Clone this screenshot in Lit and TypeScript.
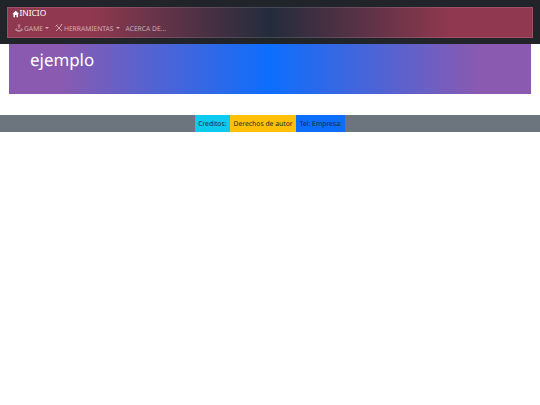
import { LitElement, html, css } from "lit";
import { customElement } from "lit/decorators.js";

@customElement("app-root")
export class AppRoot extends LitElement {
  static styles = css`
    :host { display: block; min-height: 405px; background: #fff; font-family: "Noto Sans", sans-serif; text-rendering: geometricPrecision; }
    .nav { background: #212529; padding: 7px; height: 44px; box-sizing: border-box; }
    .bar { height: 31px; box-sizing: border-box; border: 1px solid rgba(255,255,255,.13);
      background: linear-gradient(90deg, #8f384f 0%, #8f384f 16%, #232c3c 50%, #8f384f 84%, #8f384f 100%);
      padding: 0 4px; display: flex; flex-direction: column; }
    .brand { display: flex; align-items: center; color: #fff; font-size: 8.4px; line-height: 12px; height: 12px; }
    .brand svg { width: 7.500px; height: 8px; }
    .links { display: flex; align-items: center; margin-top: 2px; height: 12px; color: rgba(255,255,255,.6); font-size: 6.700px; gap: 5.500px; padding-left: 3px; }
    .link { display: flex; align-items: center; gap: 1px; }
    .link svg { width: 8px; height: 8px; }
    .caret { width: 0; height: 0; border-left: 2px solid transparent; border-right: 2px solid transparent; border-top: 2px solid currentColor; margin-left: 1.500px; }
    .hero { margin: 0 9px; height: 50px; background: linear-gradient(90deg, #8a5ab0 0%, #8a5ab0 10%, #0d6efd 50%, #8a5ab0 90%, #8a5ab0 100%); color: #fff; font-size: 16.900px; padding: 4px 21px; box-sizing: border-box; line-height: 24px; }
    .foot { margin-top: 21px; height: 17px; background: #6c757d; display: flex; justify-content: center; font-size: 6.800px; color: #212529; }
    .foot div { display: flex; align-items: center; padding: 0 3.500px; }
    .c { background: #0dcaf0; } .y { background: #ffc107; } .b { background: #0d6efd; }
  `;
  render() {
    return html`
      <div class="nav"><div class="bar">
        <div class="brand"><svg viewBox="0 0 16 16" fill="#fff"><path d="M8 1 L1 8 L3 8 L3 15 L6.500 15 L6.500 10 L9.500 10 L9.500 15 L13 15 L13 8 L15 8 Z"/></svg>INICIO</div>
        <div class="links">
          <div class="link"><svg viewBox="0 0 16 16" fill="none" stroke="currentColor" stroke-width="1.300"><circle cx="8" cy="3" r="1.800"/><path d="M8 5 V10 M3.500 8.500 L1.500 11 V12.500 L8 15 L14.500 12.500 V11 L12.500 8.500 M1.500 11 L8 13.500 L14.500 11"/></svg>GAME<span class="caret"></span></div>
          <div class="link"><svg viewBox="0 0 16 16" fill="none" stroke="currentColor" stroke-width="1.800"><path d="M3 3 L14 14 M13 3 L2 14 M1 5 L5 1 M10.500 3 A3 3 0 0 1 14.500 1.500"/></svg>HERRAMIENTAS<span class="caret"></span></div>
          <div class="link">ACERCA DE...</div>
        </div>
      </div></div>
      <div class="hero">ejemplo</div>
      <div class="foot"><div class="c">Creditos:</div><div class="y">Derechos de autor</div><div class="b">Tel: Empresa:</div></div>
    `;
  }
}
